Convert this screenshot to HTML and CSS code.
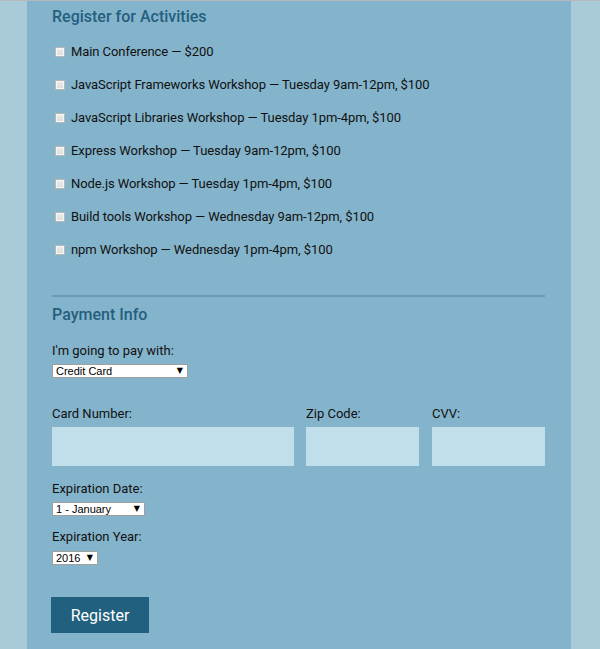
FILE: index.html
```html
<!DOCTYPE html>
<html lang="en">
<head>
<meta charset="utf-8">
<title>Register</title>
<link rel="stylesheet" href="styles.css">
</head>
<body>
<form class="container">
  <section class="activities">
    <h2 class="section-title">Register for Activities</h2>
    <label class="activity"><input type="checkbox" class="check"><span>Main Conference — $200</span></label>
    <label class="activity"><input type="checkbox" class="check"><span>JavaScript Frameworks Workshop — Tuesday 9am-12pm, $100</span></label>
    <label class="activity"><input type="checkbox" class="check"><span>JavaScript Libraries Workshop — Tuesday 1pm-4pm, $100</span></label>
    <label class="activity"><input type="checkbox" class="check"><span>Express Workshop — Tuesday 9am-12pm, $100</span></label>
    <label class="activity"><input type="checkbox" class="check"><span>Node.js Workshop — Tuesday 1pm-4pm, $100</span></label>
    <label class="activity"><input type="checkbox" class="check"><span>Build tools Workshop — Wednesday 9am-12pm, $100</span></label>
    <label class="activity"><input type="checkbox" class="check"><span>npm Workshop — Wednesday 1pm-4pm, $100</span></label>
  </section>

  <hr class="divider">

  <section class="payment">
    <h2 class="section-title">Payment Info</h2>
    <label class="field-label">I'm going to pay with:</label>
    <div class="select-wrap select-payment">
      <select class="select"><option>Credit Card</option></select>
    </div>

    <div class="card-grid">
      <label class="field-label">Card Number:</label>
      <label class="field-label">Zip Code:</label>
      <label class="field-label">CVV:</label>
      <input type="text" class="text-input">
      <input type="text" class="text-input">
      <input type="text" class="text-input">
    </div>

    <label class="field-label exp-date">Expiration Date:</label>
    <div class="select-wrap select-month">
      <select class="select"><option>1 - January</option></select>
    </div>

    <label class="field-label exp-year">Expiration Year:</label>
    <div class="select-wrap select-year">
      <select class="select"><option>2016</option></select>
    </div>
  </section>

  <button type="button" class="submit">Register</button>
</form>
</body>
</html>
```

FILE: styles.css
```css
html, body {
  margin: 0;
  padding: 0;
}

body {
  background: #a9cbd9;
  border-top: 1px solid #b4b9bc;
  font-family: Roboto, "Liberation Sans", sans-serif;
  color: #111;
  height: 648px;
  overflow: hidden;
}

.container {
  width: 493px;
  margin: 0 0 0 27px;
  padding: 0 26px 20px 25px;
  background: #84b4cb;
  min-height: 648px;
  box-sizing: content-box;
  display: flex;
  flex-direction: column;
}

.activities,
.payment {
  display: flex;
  flex-direction: column;
}

.section-title {
  margin: 0;
  font-size: 16px;
  line-height: 20px;
  color: #245f7e;
  font-weight: 500;
}

.activities .section-title {
  margin-top: 6px;
  margin-bottom: 15px;
}

.activity {
  display: flex;
  align-items: center;
  height: 20px;
  margin-bottom: 13px;
  font-size: 13px;
  line-height: 20px;
  letter-spacing: -0.08px;
}

.check {
  appearance: none;
  -webkit-appearance: none;
  width: 10px;
  height: 10px;
  margin: 0 6px 0 3px;
  border: 1px solid #b8b8b8;
  background: linear-gradient(#ededed, #dcdcdc);
  box-shadow: inset 0 0 0 1px #f6f6f6;
  flex: none;
}

.divider {
  border: 0;
  height: 2px;
  background: #6a9bb4;
  margin: 22px 0 8px;
}

.payment .section-title {
  margin-bottom: 16px;
}

.field-label {
  font-size: 13px;
  line-height: 20px;
  display: block;
}

.select-wrap {
  position: relative;
  height: 14px;
  margin-top: 3px;
}

.select-wrap::after {
  content: "▼";
  position: absolute;
  top: 0;
  right: 5px;
  font-family: "DejaVu Sans", sans-serif;
  font-size: 8px;
  line-height: 14px;
  color: #000;
  pointer-events: none;
}

.select {
  appearance: none;
  -webkit-appearance: none;
  box-sizing: border-box;
  display: block;
  height: 14px;
  margin: 0;
  padding: 0 0 0 3px;
  border: 1px solid #a0a0a0;
  border-radius: 0;
  background: #fff;
  font-family: "Liberation Sans", Arial, sans-serif;
  font-size: 11px;
  line-height: 12px;
  color: #000;
  width: 100%;
}

.select-payment { width: 136px; }
.select-month { width: 93px; }
.select-year { width: 46px; margin-top: 4px; }

.card-grid {
  display: grid;
  grid-template-columns: 242px 113px 113px;
  column-gap: 12px;
  row-gap: 3px;
  margin-top: 26px;
}

.card-grid > :nth-child(3n) {
  margin-left: 1px;
}

.text-input {
  box-sizing: border-box;
  height: 39px;
  width: 100%;
  border: 0;
  margin: 0;
  background: #c1dfea;
}

.exp-date { margin-top: 13px; }
.exp-year { margin-top: 11px; }

.submit {
  align-self: flex-start;
  margin: 32px 0 0 -1px;
  width: 98px;
  height: 36px;
  border: 0;
  background: #22607f;
  color: #fff;
  font-family: Roboto, "Liberation Sans", sans-serif;
  font-size: 16px;
  padding: 0;
}
```
